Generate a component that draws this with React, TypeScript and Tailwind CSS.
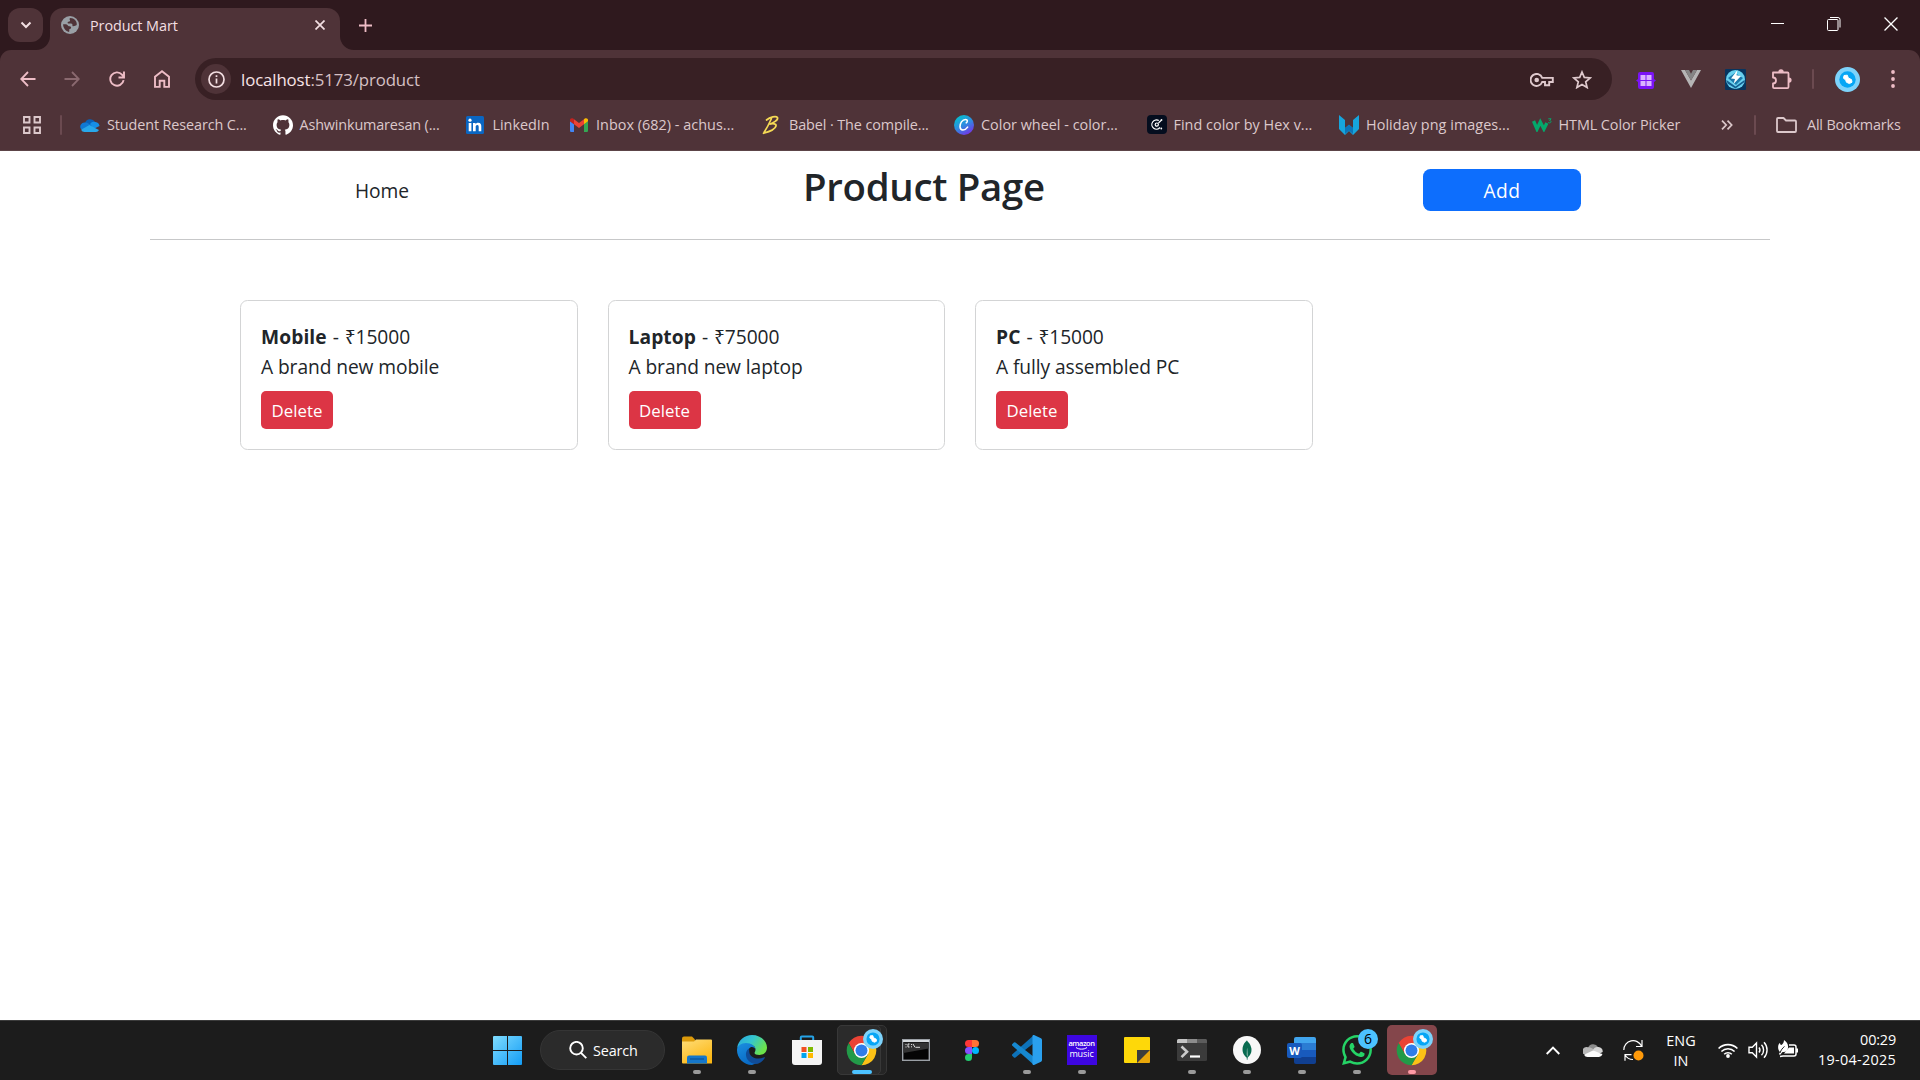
import React from 'react';
import { SiGithub, SiMongodb, SiWhatsapp } from 'react-icons/si';

function AvatarMark({ className = '' }: { className?: string }) {
  return (
    <svg viewBox="0 0 25 25" className={className}>
      <circle cx="12.5" cy="12.5" r="12.5" fill="#7dd3fb" />
      <circle cx="12.5" cy="12.5" r="8.2" fill="#06a6f5" />
      <path d="M9 8.500l3.300-.3 1 2.800 3.200 1.600.5 2.600-2.600 1.400-3-1.400-.7-2.300-2.200-1.600z" fill="#fff" stroke="#fff" strokeWidth="1" strokeLinejoin="round" />
    </svg>
  );
}

function ChromeLogo() {
  return (
    <svg viewBox="1 1 46 46" className="size-[31px]">
      <path d="M4.950 13A22 22 0 0 1 43.050 13H24L14.470 29.500z" fill="#ea4335" />
      <path d="M43.050 13A22 22 0 0 1 24 46L33.530 29.500 24 13z" fill="#fbc116" />
      <path d="M24 46A22 22 0 0 1 4.950 13L14.470 29.500H33.530z" fill="#229a48" />
      <circle cx="24" cy="24" r="11.200" fill="#fff" />
      <circle cx="24" cy="24" r="8.900" fill="#2f7de9" />
    </svg>
  );
}

/* ---------- Browser ---------- */

function TabStrip() {
  return (
    <div className="flex h-[50px] items-start bg-[#2f191e] pl-2 pt-2">
      <button className="flex h-[34px] w-[35px] items-center justify-center rounded-xl bg-[#4f3338]">
        <svg viewBox="0 0 12 12" className="size-3" fill="none" stroke="#f3dfe2" strokeWidth="2"><path d="M1.500 3.500L6 8l4.500-4.500" /></svg>
      </button>
      <div className="relative ml-[7px] flex h-[42px] w-[290px] items-start rounded-t-[13px] bg-[#4f3338]">
        <svg viewBox="0 0 14 14" className="absolute -left-[14px] bottom-0 size-[14px]"><path d="M14 0v14H0A14 14 0 0 0 14 0z" fill="#4f3338" /></svg>
        <svg viewBox="0 0 14 14" className="absolute -right-[14px] bottom-0 size-[14px]"><path d="M0 0v14h14A14 14 0 0 1 0 0z" fill="#4f3338" /></svg>
        <div className="flex h-[34px] w-full items-center pl-[11px] pr-[15px]">
          <svg viewBox="0 0 18 18" className="size-[18px]">
            <circle cx="9" cy="9" r="9" fill="#9aa0a6" />
            <path d="M9.500 2c-1 .2-1.300 1-.6 2 .6.9-.3 1.600-1.500 1.700-1 .1-.9 1.200-.4 1.700H10c1.300 0 1.700 1 1.400 2 .2 1 1.200.9 2 .7.900-.2 2.200-.4 2.400-1.500C16 5 13.200 2 9.500 2zM2.100 8.300C2 12 4.800 15.300 8 15.900c.6-1 .2-1.900.2-2.700 1.300-.1 2.100-.9 1.900-2-.2-1-1.200-1-2.200-1-.9-.1-1.100-1.400-2.200-1.700-.8-.2-2.800-.2-3.600-.2z" fill="#4f3338" />
          </svg>
          <span className="ml-[11px] flex-1 whitespace-nowrap pt-px text-[14.4px] tracking-[-0.06px] text-[#f3dfe2]">Product Mart</span>
          <svg viewBox="0 0 10 10" className="size-[10px]" fill="none" stroke="#f3dfe2" strokeWidth="1.700"><path d="M.5.5l9 9M9.500.5l-9 9" /></svg>
        </div>
      </div>
      <svg viewBox="0 0 13 13" className="ml-[19px] mt-[11px] size-[13px]" fill="none" stroke="#eebdc6" strokeWidth="1.800"><path d="M6.500 0v13M0 6.500h13" /></svg>
      <div className="ml-auto flex items-center pr-[22px] pt-[9px]">
        <div className="mb-0.5 h-px w-[13px] bg-white" />
        <svg viewBox="0 0 14 14" className="ml-[43px] size-[14px]" fill="none" stroke="#fff">
          <rect x=".5" y="2.500" width="10.500" height="11" rx="1" />
          <path d="M3 .5h8a2 2 0 0 1 2 2v8" />
        </svg>
        <svg viewBox="0 0 13 13" className="ml-[43px] size-[14px]" fill="none" stroke="#fff" strokeWidth="1.200"><path d="M.5.5l12 12M12.500.5l-12 12" /></svg>
      </div>
    </div>
  );
}

function Toolbar() {
  return (
    <div className="bg-[#2f191e]">
      <div className="flex h-[60px] items-start rounded-t-[11px] bg-[#4f3338] pt-2">
        <div className="flex h-[42px] w-[195px] items-center pl-5">
          <svg viewBox="0 0 16 16" className="size-4" fill="none" stroke="#eebdc6" strokeWidth="1.800"><path d="M15.500 8H1.500M8 1L1.200 8 8 15" /></svg>
          <svg viewBox="0 0 16 16" className="ml-7 size-4" fill="none" stroke="#8a696f" strokeWidth="1.800"><path d="M.5 8h14M8 1l6.800 7L8 15" /></svg>
          <svg viewBox="0 0 16 16" className="ml-[29px] size-4" fill="none" stroke="#eebdc6" strokeWidth="1.900"><path d="M14.600 9.200A6.700 6.700 0 1 1 13 3.600l1.600 2.400" /><path d="M15 .5v6H9.500" /></svg>
          <svg viewBox="0 0 16 18" className="ml-[29px] h-[18px] w-4" fill="none" stroke="#eebdc6" strokeWidth="1.900"><path d="M1 16.900V6.800L8 1.300l7 5.500v10.100h-4.700v-6.200H5.700v6.200z" /></svg>
        </div>
        <div className="flex h-[42px] w-[1417px] items-center rounded-full bg-[#382024] pl-1.5 pr-5">
          <div className="flex size-[30px] items-center justify-center rounded-full bg-[#4f3338]">
            <svg viewBox="0 0 17 17" className="size-[17px]" fill="none" stroke="#f3dfe2" strokeWidth="1.700"><circle cx="8.500" cy="8.500" r="7.500" /><path d="M8.500 7.500v5M8.500 4.200v1.900" /></svg>
          </div>
          <div className="ml-[10px] flex-1 whitespace-nowrap pt-px text-[16.8px] tracking-[-0.1px] text-[#d6c0c4]"><span className="text-[#f8e4e7]">localhost</span>:5173/product</div>
          <svg viewBox="0 0 24 14" className="mt-[2px] h-[14px] w-6" fill="none" stroke="#dfc9cd" strokeWidth="1.900">
            <path d="M12.200 4.900A6 6 0 1 0 12.200 9H15v3.200h4.200V9H22.800V4.900z" /><circle cx="6.700" cy="7" r="2.300" fill="#dfc9cd" stroke="none" />
          </svg>
          <svg viewBox="0 0 20 19" className="ml-[18px] h-[19px] w-5" fill="none" stroke="#dfc9cd" strokeWidth="1.700"><path d="M10 2l2.300 5.400 5.900.5-4.500 3.900 1.400 5.700L10 14.400l-5.100 3.100 1.400-5.700L1.800 7.900l5.900-.5z" /></svg>
        </div>
        <div className="flex h-[42px] flex-1 items-center pl-[24px]">
          <svg viewBox="0 0 20 17" className="mt-[2px] h-[17px] w-5">
            <path d="M4 0h12a2 2 0 0 1 2 2v5l2 1.500L18 10v5a2 2 0 0 1-2 2H4a2 2 0 0 1-2-2v-5L0 8.500 2 7V2a2 2 0 0 1 2-2z" fill="#7a13f5" />
            <path d="M4.500 3h5v5h-5zM10.500 3h5v5h-5zM4.500 9h5v5h-5zM10.500 9h5v5h-5z" fill="#d9b3ff" />
          </svg>
          <svg viewBox="0 0 20 18" className="ml-[25px] h-[18px] w-5"><path d="M0 0h4l6 10.500L16 0h4L10 18z" fill="#b5b5b5" /><path d="M4 0h4l2 3.800L12 0h4l-6 10.500z" fill="#858585" /></svg>
          <svg viewBox="0 0 21 21" className="ml-[24px] mt-[1px] size-[21px]">
            <rect width="21" height="21" rx="1" fill="#07355f" /><circle cx="10.500" cy="10.500" r="9.500" fill="#67d0ef" />
            <path d="M1.500 11l9 6.500 9-6.500v2l-9 6.500-8-5z" fill="#135e91" /><path d="M3 9l7-5 8 5-7 7z" fill="#1b79ac" />
            <path d="M12.500 1L6 9.500l4 .6-1.500 5 7.500-8-4.500-.8z" fill="#fff" />
          </svg>
          <svg viewBox="0 0 21 21" className="ml-[25px] size-[21px]" fill="none" stroke="#eebdc6" strokeWidth="1.800">
            <path d="M2 3.500h14.500a1 1 0 0 1 1 1V18a1.200 1.200 0 0 1-1.200 1.200H3.200A1.200 1.200 0 0 1 2 18v-3.500a3 3 0 0 0 0-6z" strokeLinejoin="round" />
            <path d="M7.300 3a2.700 2.700 0 0 1 5.400 0zM18 8.500a2.600 2.600 0 0 1 0 5.200z" fill="#eebdc6" stroke="none" />
          </svg>
          <div className="ml-5 h-5 w-[2px] rounded bg-[#6b4a50]" />
          <AvatarMark className="ml-[21px] size-[25px]" />
          <svg viewBox="0 0 4 18" className="ml-[31px] h-[18px] w-1" fill="#eebdc6"><circle cx="2" cy="2" r="1.900" /><circle cx="2" cy="9" r="1.900" /><circle cx="2" cy="16" r="1.900" /></svg>
        </div>
      </div>
    </div>
  );
}

const bookmarks: { label: string; width: string; tracking: string; icon: React.ReactNode }[] = [
  {
    label: 'Student Research C...', width: 'w-[192.5px]', tracking: 'tracking-[-0.11px]',
    icon: (
      <svg viewBox="0 0 20 14" className="h-[14px] w-5"><path d="M5 5a5.500 5.500 0 0 1 10-1l-5 5z" fill="#0a62b8" /><path d="M1 11a4.200 4.200 0 0 1 4-6.500c3 0 5 2 7 4l-4 4z" fill="#1079d3" /><path d="M10 6a5 5 0 0 1 5.500-2 4.500 4.500 0 0 1 4 4l-6 3z" fill="#168fe6" /><path d="M1 11.800L9.500 7c3 1.500 6 3.500 9.500 5a4 4 0 0 1-3 2H4.500A4 4 0 0 1 1 11.800z" fill="#28a8ea" /></svg>
    ),
  },
  { label: 'Ashwinkumaresan (...', width: 'w-[193px]', tracking: 'tracking-[-0.15px]', icon: <SiGithub className="size-5 text-white" /> },
  {
    label: 'LinkedIn', width: 'w-[103.500px]', tracking: 'tracking-[-0.02px]',
    icon: (
      <svg viewBox="0 0 18 18" className="size-[18px]">
        <rect width="18" height="18" rx="1.500" fill="#0a66c2" />
        <circle cx="4" cy="4.200" r="1.600" fill="#fff" />
        <path d="M2.700 7h2.700v8.300H2.700zM7 7h2.500v1.200C10 7.400 11 6.800 12.200 6.800c2.600 0 3.100 1.700 3.100 3.900v4.600h-2.600v-4.100c0-1 0-2.200-1.400-2.200s-1.600 1-1.600 2.100v4.200H7z" fill="#fff" />
      </svg>
    ),
  },
  {
    label: 'Inbox (682) - achus...', width: 'w-[193px]', tracking: 'tracking-[0.03px]',
    icon: (
      <svg viewBox="0 0 18 14" className="ml-[1px] h-[14px] w-[18px]"><path d="M0 3v9.700C0 13.400.6 14 1.300 14H4V6.200z" fill="#4285f4" /><path d="M18 3v9.700c0 .7-.6 1.300-1.300 1.300H14V6.200z" fill="#34a853" /><path d="M4 1.200v5l5 3.700 5-3.700v-5L9 5z" fill="#ea4335" /><path d="M0 3.200L4 6.200v-5L3.200.6C1.900-.4 0 .3 0 2z" fill="#c5221f" /><path d="M18 3.200l-4 3v-5l.8-.6c1.300-1 3.200-.3 3.200 1.400z" fill="#fbbc04" /></svg>
    ),
  },
  {
    label: 'Babel · The compile...', width: 'w-[192px]', tracking: 'tracking-[-0.1px]',
    icon: <svg viewBox="0 0 18 20" className="h-5 w-[18px]" fill="none" stroke="#f5da55" strokeWidth="1.700" strokeLinecap="round"><path d="M4.500 5C8 2 14 .5 15.500 2.500 16.500 5 11 8.200 7.500 9.200 11 8.300 14.500 8.700 14 11c-.7 3-6 5.500-12.500 7.300M9.500 3.500C7.500 8 5 13 2 17.500" /></svg>,
  },
  {
    label: 'Color wheel - color...', width: 'w-[192.5px]', tracking: 'tracking-[0.01px]',
    icon: (
      <svg viewBox="0 0 20 20" className="size-5"><defs><linearGradient id="canva" x1="0.2" y1="0" x2="0.8" y2="1"><stop offset="0" stopColor="#00c4cc" /><stop offset=".5" stopColor="#2f8ae0" /><stop offset="1" stopColor="#7d2ae8" /></linearGradient></defs><circle cx="10" cy="10" r="10" fill="url(#canva)" /><path d="M12.300 7.800c1.400-.7 1.600-3.300-.7-3.300C8.200 4.500 5.800 8.500 6 11.800c.3 4.200 4.700 4.400 7.600.3" fill="none" stroke="#fff" strokeWidth="1.600" strokeLinecap="round" /></svg>
    ),
  },
  {
    label: 'Find color by Hex v...', width: 'w-[192.5px]', tracking: 'tracking-[0.03px]',
    icon: <svg viewBox="0 0 20 20" className="size-5"><rect width="20" height="19" rx="4" fill="#040d1e" /><g fill="none" stroke="#fff" strokeWidth="1.200"><path d="M11.800 5.600A4.600 4.600 0 1 0 13 12.500M11.500 8l2.500-2.500" /><circle cx="9.800" cy="9.600" r="1.600" /></g><circle cx="14.300" cy="13.500" r=".9" fill="#fff" /><circle cx="14.500" cy="5" r=".9" fill="#fff" /></svg>,
  },
  {
    label: 'Holiday png images...', width: 'w-[192.5px]', tracking: 'tracking-[0.06px]',
    icon: <svg viewBox="0 0 20 20" className="size-5"><path d="M0 0l6 5v8l4-3 4 3V5l6-5v14l-6 6-4-4-4 4-6-6z" fill="#16a5dc" /><path d="M6 13l4-3.500 4 3.500v6l-4-3.500L6 19z" fill="#0c74b8" /></svg>,
  },
  {
    label: 'HTML Color Picker', width: 'w-[190.500px]', tracking: 'tracking-[-0.08px]',
    icon: <svg viewBox="0 0 20 14" className="h-[14px] w-5" fill="none" stroke="#04a86b"><path d="M1.500 3l3.500 8 3.300-7 3.600 7 3-6" strokeWidth="3.400" /><path d="M16.300.8h2.800l-1.500 1.700c2 0 1.800 2.400 0 2.400-.8 0-1.300-.4-1.500-.8" strokeWidth="1" /></svg>,
  },
];

function BookmarksBar() {
  return (
    <div className="flex h-[41px] items-start border-b border-[#5c4448] bg-[#4f3338] pl-[23px] text-[14.4px] text-[#dcc8cb]">
      <div className="flex h-[30px] w-full items-center">
        <svg viewBox="0 0 18 18" className="size-[18px] shrink-0" fill="none" stroke="#dcc8cb" strokeWidth="1.900"><path d="M1 1h5.500v5.500H1zM11.500 1H17v5.500h-5.500zM1 11.500h5.500V17H1zM11.500 11.500H17V17h-5.500z" /></svg>
        <div className="ml-[19px] h-5 w-[2px] shrink-0 rounded bg-[#6b4a50]" />
        <div className="ml-[18px] flex">
          {bookmarks.map((b) => (
            <div key={b.label} className={`flex shrink-0 items-center ${b.width}`}>
              <div className="flex w-[27px] shrink-0 items-center">{b.icon}</div>
              <span className={`whitespace-nowrap ${b.tracking}`}>{b.label}</span>
            </div>
          ))}
        </div>
        <svg viewBox="0 0 12 10" className="-ml-px h-[10px] w-3 shrink-0" fill="none" stroke="#dcc8cb" strokeWidth="1.700"><path d="M1 .6L5.200 5 1 9.400M6.500.6L10.700 5 6.500 9.400" /></svg>
        <div className="ml-[21px] h-5 w-[2px] shrink-0 rounded bg-[#6b4a50]" />
        <svg viewBox="0 0 21 16" className="ml-5 h-4 w-[21px] shrink-0" fill="none" stroke="#dcc8cb" strokeWidth="1.800" strokeLinejoin="round"><path d="M1 2a1 1 0 0 1 1-1h5.500l2.500 2.500h9a1 1 0 0 1 1 1V14a1 1 0 0 1-1 1H2a1 1 0 0 1-1-1z" /></svg>
        <span className="ml-[10px] whitespace-nowrap tracking-[-0.18px]">All Bookmarks</span>
      </div>
    </div>
  );
}

/* ---------- Product page ---------- */

const products = [
  { name: 'Mobile', price: 15000, description: 'A brand new mobile' },
  { name: 'Laptop', price: 75000, description: 'A brand new laptop' },
  { name: 'PC', price: 15000, description: 'A fully assembled PC' },
];

function ProductPage() {
  return (
    <main className="flex-1 bg-white text-[19.2px] leading-[30px] tracking-[-0.08px] text-[#212529]">
      <header className="mx-auto flex h-[89px] w-[1620px] items-start border-b border-[#c7c8c9] pt-[18px]">
        <a className="ml-[205px] mt-[7px] w-[448px]">Home</a>
        <h1 className="mt-[-7px] w-[620px] text-[38.4px] font-semibold leading-[48px] tracking-[-0.3px]">Product Page</h1>
        <button className="h-[42px] w-[158px] rounded-[7.5px] bg-[#0d6efd] pt-px tracking-[0.5px] text-white">Add</button>
      </header>
      <section className="mx-auto grid w-[1470px] grid-cols-4 pt-[60px]">
        {products.map((p) => (
          <div key={p.name} className="px-[15px]">
            <article className="h-[150px] rounded-[7.5px] border border-[#d3d4d5] px-5 pt-[21px]">
              <p className="[word-spacing:1px]"><strong className="font-bold tracking-[0.1px]">{p.name}</strong> - ₹{p.price}</p>
              <p>{p.description}</p>
              <button className="mt-[9px] flex h-[38px] w-[72px] items-center justify-center rounded-[5px] bg-[#dc3545] pt-px text-[16.8px] tracking-[0.08px] text-white">Delete</button>
            </article>
          </div>
        ))}
      </section>
    </main>
  );
}

/* ---------- Taskbar ---------- */

function Slot({ children, running = false }: { children: React.ReactNode; running?: boolean }) {
  return (
    <div className="relative flex h-[50px] w-[55px] items-center justify-center">
      {children}
      {running && <div className="absolute bottom-[1px] h-1 w-2 rounded-full bg-[#9a9a9a]" />}
    </div>
  );
}

function Taskbar() {
  return (
    <footer className="flex h-[60px] items-start border-t border-[#3b3b3b] bg-[#1c1c1c] pl-[493px] pt-1 text-[14.4px] text-white">
      <div className="flex h-[50px] items-center">
        <svg viewBox="0 0 29 29" className="size-[29px]"><defs><linearGradient id="win" x1="0" y1="0" x2="1" y2="1"><stop offset="0" stopColor="#7fdcff" /><stop offset="1" stopColor="#139cf5" /></linearGradient></defs><path d="M1 0h13v14H0V1a1 1 0 0 1 1-1zM15 0h13a1 1 0 0 1 1 1v13H15zM0 15h14v14H1a1 1 0 0 1-1-1zM15 15h14v13a1 1 0 0 1-1 1H15z" fill="url(#win)" /></svg>
        <div className="ml-[18px] flex h-10 w-[125px] items-center rounded-full border border-[#353535] bg-[#2b2b2b] pl-[28px]">
          <svg viewBox="0 0 18 18" className="size-[18px]" fill="none" stroke="#fff" strokeWidth="1.900"><circle cx="7.500" cy="7.200" r="6.300" /><path d="M12 11.800l5.300 5.300" /></svg>
          <span className="ml-[6px] pt-px tracking-[-0.15px]">Search</span>
        </div>
        <div className="ml-1 flex">
          <Slot running>
            <svg viewBox="0 0 30 27" className="size-[30px]"><defs><linearGradient id="fold" x1="0" y1="0" x2="0.6" y2="1"><stop offset="0" stopColor="#ffdd78" /><stop offset="1" stopColor="#fcb816" /></linearGradient></defs><path d="M0 2a2 2 0 0 1 2-2h8l3 3v5H0z" fill="#dc9a0a" /><path d="M0 5h12l2-2h15a1 1 0 0 1 1 1v23H1a1 1 0 0 1-1-1z" fill="url(#fold)" /><path d="M5 27v-6a2 2 0 0 1 2-2h16a2 2 0 0 1 2 2v6z" fill="#1577ca" /><path d="M8 22.500h14" stroke="#0a4b8c" /></svg>
          </Slot>
          <Slot running>
            <svg viewBox="0 0 30 30" className="size-[30px]"><defs><linearGradient id="edgeTop" x1="0" y1="0" x2="1" y2=".5"><stop offset="0" stopColor="#27a5e0" /><stop offset=".5" stopColor="#35c6ce" /><stop offset="1" stopColor="#6ce34a" /></linearGradient><linearGradient id="edgeLow" x1="0" y1="0" x2=".5" y2="1"><stop offset="0" stopColor="#1b8fe0" /><stop offset="1" stopColor="#0869c4" /></linearGradient></defs>
              <path d="M15 0C23.500 0 30 6 30 12.500c0 5-4 7.500-7.500 7.500-3 0-5-1-5-2 0-.7 1-1.500 1-3.500 0-3-3-5-7-5C6 9.500 1 13 .2 12.500 1.500 5 7.500 0 15 0z" fill="url(#edgeTop)" />
              <path d="M0 15c0-4 4-7 9-7 5.500 0 9.500 3 9.500 6.500-.5-1.500-2-2.500-3.500-2.500-2.500 0-4 2.500-4 5.500 0 6 5 9.500 10 9.500a14.500 14.500 0 0 1-6 3C6.500 30 0 23 0 15z" fill="url(#edgeLow)" />
              <path d="M12 13.500c-3.500 2-4 7-1.500 11C13 28.500 19 30 22.500 28c2.500-1.400 4-3 5.300-5 .4-.7-.2-1-.8-.7-6 3-13.500.5-14.500-4.300-.3-1.700-.2-3.500-.5-4.500z" fill="#104c98" /></svg>
          </Slot>
          <Slot>
            <svg viewBox="0 0 30 30" className="size-[30px]"><path d="M8.800 6V2.500a1 1 0 0 1 1-1h10.400a1 1 0 0 1 1 1V6" fill="none" stroke="#25a4e8" strokeWidth="2" /><path d="M0 5h30v22a3 3 0 0 1-3 3H3a3 3 0 0 1-3-3z" fill="#f4f4f4" /><path d="M9.500 12h5v5h-5z" fill="#f25022" /><path d="M16 12h5v5h-5z" fill="#7fba00" /><path d="M9.500 18h5v5h-5z" fill="#00a4ef" /><path d="M16 18h5v5h-5z" fill="#ffb900" /></svg>
          </Slot>
          <div className="flex h-[50px] w-[55px] items-center justify-center">
            <div className="relative flex size-[50px] items-center justify-center rounded-[5px] border border-[#363636] bg-[#252525]">
              <div className="absolute -left-px -top-px h-[50px] w-[44px] rounded-[5px] border border-[#383838] bg-[#2b2b2b]" />
              <div className="relative"><ChromeLogo /></div>
              <AvatarMark className="absolute right-[3px] top-[3px] size-5" />
              <div className="absolute bottom-0 h-1 w-5 rounded-full bg-[#4cc2ff]" />
            </div>
          </div>
          <Slot>
            <svg viewBox="0 0 28 22" className="mr-px h-[22px] w-7"><rect x=".7" y=".7" width="26.600" height="20.600" fill="#050505" stroke="#9ba0a6" strokeWidth="1.400" /><path d="M1 1h26v2H1z" fill="#d5d9dc" /><path d="M1.500 3.500h25v6L1.500 14z" fill="#333" /><path d="M4 5v1M4 7.500v1M7.500 5H6v3h1.500M9.500 5v1M9.500 7.300v1M11 5l2 3.300M13.500 8.300H18" stroke="#ddd" fill="none" /></svg>
          </Slot>
          <Slot>
            <svg viewBox="0 0 14 21" className="h-[21px] w-[14px]"><path d="M3.500 0H7v7H3.500a3.500 3.500 0 0 1 0-7z" fill="#ff3737" /><path d="M7 0h3.500a3.500 3.500 0 0 1 0 7H7z" fill="#ff7237" /><path d="M3.500 7H7v7H3.500a3.500 3.500 0 0 1 0-7z" fill="#874fff" /><circle cx="10.500" cy="10.500" r="3.500" fill="#00b6ff" /><path d="M3.500 14H7v3.500A3.500 3.500 0 1 1 3.500 14z" fill="#24cb71" /></svg>
          </Slot>
          <Slot running>
            <svg viewBox="0 0 30 30" className="size-[30px]"><path d="M22 0v8L3.500 22.500a1.300 1.300 0 0 1-1.600 0L.4 21a1.200 1.200 0 0 1 0-1.800z" fill="#0d72b9" /><path d="M22 30v-8L3.500 7.500a1.300 1.300 0 0 0-1.600 0L.4 9a1.200 1.200 0 0 0 0 1.800z" fill="#1688d0" /><path d="M22 0l7 3.300a2 2 0 0 1 1 1.700v20a2 2 0 0 1-1 1.700L22 30c-.8.3-1.500-.2-1.500-1V1c0-.8.700-1.300 1.500-1z" fill="#2aa0ee" /></svg>
          </Slot>
          <Slot running>
            <div className="flex size-[30px] flex-col items-center bg-[#3d06e0] pt-[4px] text-white">
              <span className="text-[7.5px] font-semibold leading-[8px] tracking-[-0.45px]">amazon</span>
              <svg viewBox="0 0 12 3" className="h-[3px] w-3" fill="none" stroke="#fff"><path d="M0 .5c3 2.200 8 2.200 11 0" /></svg>
              <span className="text-[9px] font-normal leading-[8px] tracking-[-0.1px]">music</span>
            </div>
          </Slot>
          <Slot>
            <svg viewBox="0 0 26 26" className="size-[26px]"><path d="M1 0h24a1 1 0 0 1 1 1v12H13v13H1a1 1 0 0 1-1-1V1a1 1 0 0 1 1-1z" fill="#fed809" /><path d="M13 13h13v12a1 1 0 0 1-1 1H13z" fill="#e9a70a" /><path d="M13 13h13L13 26z" fill="#3d3d3d" /></svg>
          </Slot>
          <Slot running>
            <svg viewBox="0 0 30 22" className="h-[22px] w-[30px]"><rect width="30" height="22" rx="1.500" fill="#3b3b3b" /><path d="M1.500 0H10v4H0V1.500A1.500 1.500 0 0 1 1.500 0z" fill="#c4c4c4" /><path d="M10 0h10v4H10z" fill="#8c8c8c" /><path d="M20 0h8.500A1.500 1.500 0 0 1 30 1.500V4H20z" fill="#5c5c5c" /><path d="M4.500 7.500l5.500 5.300-5.500 5.300" fill="none" stroke="#ccc" strokeWidth="2.600" /><path d="M13 17.500h10" stroke="#fff" strokeWidth="2.200" /></svg>
          </Slot>
          <Slot running>
            <div className="flex size-[28px] items-center justify-center rounded-full bg-[#f7f7f7]"><SiMongodb className="size-[20px] text-[#096b50]" /></div>
          </Slot>
          <Slot running>
            <div className="relative flex h-[27px] w-[29px] justify-end">
              <div className="flex w-[22px] flex-col overflow-hidden rounded-[2px]"><div className="flex-1 bg-[#41a5ee]" /><div className="flex-1 bg-[#2b7cd3]" /><div className="flex-1 bg-[#185abd]" /><div className="flex-1 bg-[#103f91]" /></div>
              <div className="absolute left-0 top-[6px] flex size-[15px] items-center justify-center rounded-[2px] bg-[#185abd] text-[11px] font-bold leading-none">W</div>
            </div>
          </Slot>
          <Slot running>
            <SiWhatsapp className="size-[30px] text-[#25d366]" />
            <div className="absolute right-[6px] top-[4px] flex size-5 items-center justify-center rounded-full bg-[#4cc2ff] text-[14px] leading-none text-black">6</div>
          </Slot>
          <div className="flex h-[50px] w-[55px] items-center justify-center">
            <div className="relative flex size-[50px] items-center justify-center rounded-[5px] bg-[#84464b]">
              <ChromeLogo />
              <AvatarMark className="absolute right-1 top-1 size-5" />
              <div className="absolute bottom-[1px] h-1 w-2 rounded-full bg-[#ff9aa5]" />
            </div>
          </div>
        </div>
      </div>
      <div className="ml-auto flex h-[50px] items-center pr-6">
        <svg viewBox="0 0 14 9" className="h-[9px] w-[14px]" fill="none" stroke="#fff" strokeWidth="1.900"><path d="M.7 8L7 1.500 13.300 8" /></svg>
        <svg viewBox="0 0 20 14" className="ml-[23px] h-[14px] w-5"><path d="M5 5a5.500 5.500 0 0 1 10-1l-4 6z" fill="#8c8c8c" /><path d="M.5 11A4.200 4.200 0 0 1 5 4.200c3 0 5 1.500 7 3.500l-4 5z" fill="#b8b8b8" /><path d="M10 7a5 5 0 0 1 5.500-3 4.500 4.500 0 0 1 4.200 5l-6 3z" fill="#d5d5d5" /><path d="M1 11.800L10 7.500c3 1 6 2.500 9.500 3.500a4 4 0 0 1-3.500 3H4.500A4 4 0 0 1 1 11.800z" fill="#fbfbfb" /></svg>
        <svg viewBox="0 0 21 21" className="ml-[20px] size-[21px]" fill="none" stroke="#fff" strokeWidth="1.200"><path d="M.8 10A9.300 9.300 0 0 1 18.500 6M19 0v6.500h-6M8.500 14.700H2v6M2 15a9.300 9.300 0 0 0 8 4.500" /><circle cx="15.500" cy="15.500" r="5" fill="#ff9a0a" stroke="none" /></svg>
        <div className="ml-[22px] w-[30px] pt-px text-center leading-5 tracking-[0.08px]">ENG<br />IN</div>
        <svg viewBox="0 0 20 15" className="ml-[22px] h-[15px] w-5" fill="none" stroke="#fff" strokeWidth="1.600"><path d="M.6 5.500a13.300 13.300 0 0 1 18.800 0M3.400 8.500a9.300 9.300 0 0 1 13.200 0M6.200 11.300a5.400 5.400 0 0 1 7.600 0" /><circle cx="10" cy="13" r="1.900" fill="#fff" stroke="none" /></svg>
        <svg viewBox="0 0 20 18" className="ml-[10px] h-[18px] w-5" fill="none" stroke="#fff" strokeWidth="1.400"><path d="M1 6.300h3.300L8.500 2v14l-4.200-4.300H1zM11 6.500a4 4 0 0 1 0 5M13.500 3.800a7.500 7.500 0 0 1 0 10.400M16 1.200a11.500 11.500 0 0 1 0 15.600" /></svg>
        <svg viewBox="0 0 20 18" className="ml-[10px] mt-[-3px] h-[18px] w-5"><path d="M11 5h5a2 2 0 0 1 2 2v7a2 2 0 0 1-2 2H5l-3 .5" fill="none" stroke="#fff" strokeWidth="1.500" /><path d="M18 8.500h2v4h-2z" fill="#fff" /><path d="M11 7.500h5v6H6z" fill="#fff" /><path d="M6 0c3 2 4.500 4.500 4 8-.4 3-2.500 4.500-5.500 4L2 15l-1-1 1-2C-1 9 0 4 2 3c0 1 .5 2 1.500 2C5 4 6 2 6 0z" fill="#fff" /><path d="M2 13c1-3 2.500-5 4.500-6.500" stroke="#1c1c1c" fill="none" /></svg>
        <div className="ml-[18px] w-[80px] whitespace-nowrap text-right leading-5 tracking-[0.3px]"><span className="tracking-[-0.15px]">00:29</span><br />19-04-2025</div>
      </div>
    </footer>
  );
}

export default function App() {
  return (
    <div className="flex h-[1080px] w-[1920px] flex-col overflow-hidden font-['Open_Sans','Noto_Sans',sans-serif]">
      <TabStrip />
      <Toolbar />
      <BookmarksBar />
      <ProductPage />
      <Taskbar />
    </div>
  );
}
